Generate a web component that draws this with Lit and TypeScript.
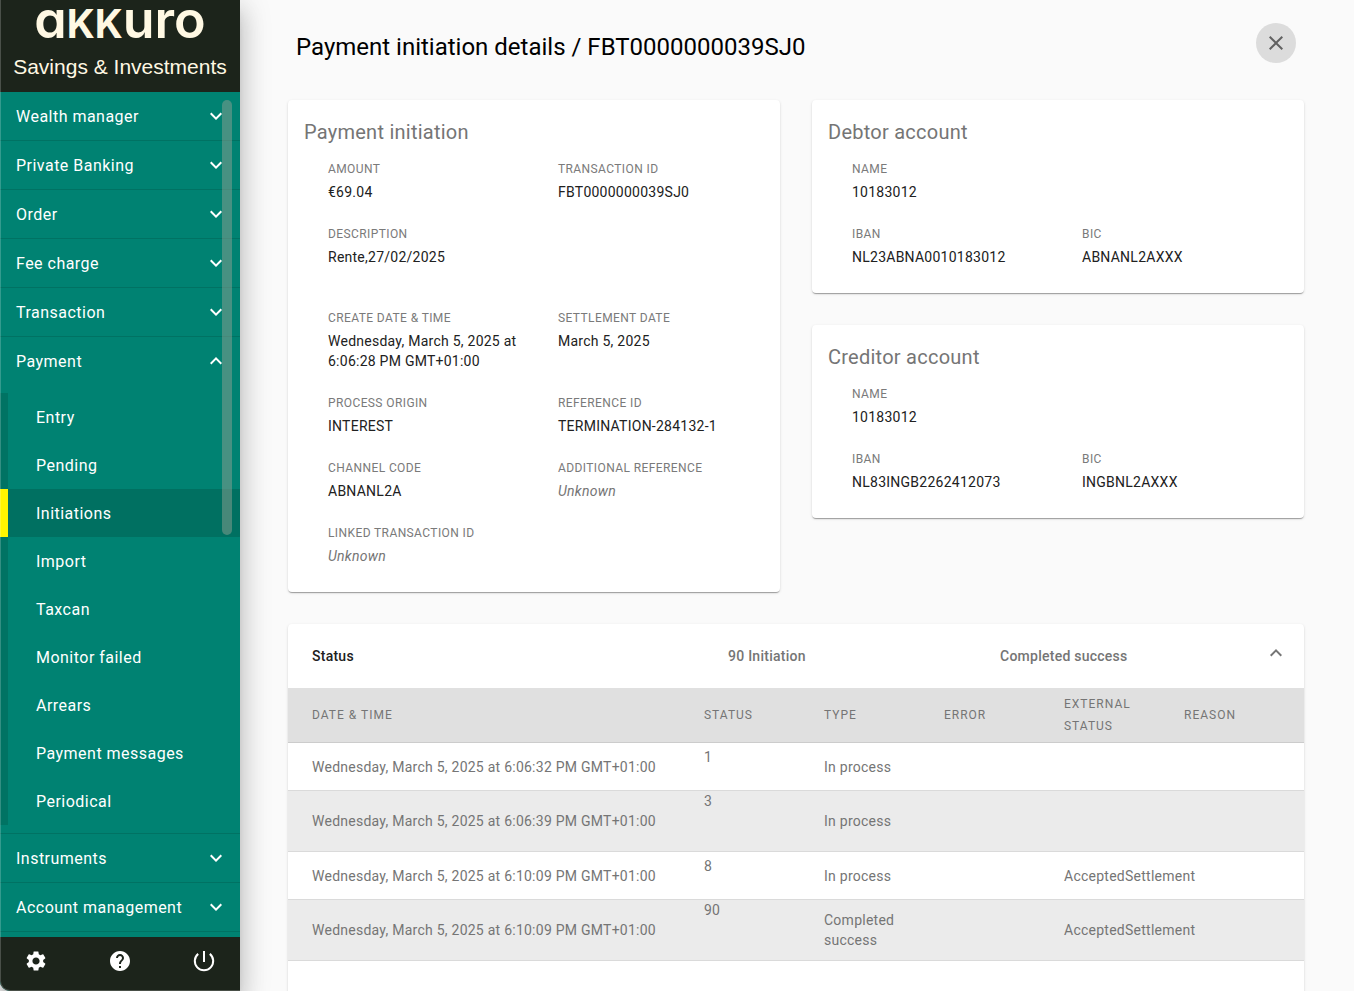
import { LitElement, html, css, svg, nothing } from "lit";
import { customElement, property, state } from "lit/decorators.js";
import { classMap } from "lit/directives/class-map.js";

interface Section {
  label: string;
  children?: string[];
}

interface Field {
  label: string;
  value?: string;
  kind?: "tall" | "wide";
}

interface StatusRow {
  date: string;
  status: string;
  type: string;
  external: string;
}

const SECTIONS: Section[] = [
  { label: "Wealth manager" },
  { label: "Private Banking" },
  { label: "Order" },
  { label: "Fee charge" },
  { label: "Transaction" },
  {
    label: "Payment",
    children: [
      "Entry",
      "Pending",
      "Initiations",
      "Import",
      "Taxcan",
      "Monitor failed",
      "Arrears",
      "Payment messages",
      "Periodical",
    ],
  },
  { label: "Instruments" },
  { label: "Account management" },
];

const INITIATION: Field[] = [
  { label: "Amount", value: "€69.04" },
  { label: "Transaction ID", value: "FBT0000000039SJ0" },
  { label: "Description", value: "Rente,27/02/2025", kind: "tall" },
  { label: "Create date & time", value: "Wednesday, March 5, 2025 at 6:06:28 PM GMT+01:00" },
  { label: "Settlement date", value: "March 5, 2025" },
  { label: "Process origin", value: "INTEREST" },
  { label: "Reference ID", value: "TERMINATION-284132-1" },
  { label: "Channel code", value: "ABNANL2A" },
  { label: "Additional reference" },
  { label: "Linked transaction ID", kind: "wide" },
];

const DEBTOR: Field[] = [
  { label: "Name", value: "10183012", kind: "wide" },
  { label: "IBAN", value: "NL23ABNA0010183012" },
  { label: "BIC", value: "ABNANL2AXXX" },
];

const CREDITOR: Field[] = [
  { label: "Name", value: "10183012", kind: "wide" },
  { label: "IBAN", value: "NL83INGB2262412073" },
  { label: "BIC", value: "INGBNL2AXXX" },
];

const ROWS: StatusRow[] = [
  { date: "Wednesday, March 5, 2025 at 6:06:32 PM GMT+01:00", status: "1", type: "In process", external: "" },
  { date: "Wednesday, March 5, 2025 at 6:06:39 PM GMT+01:00", status: "3", type: "In process", external: "" },
  { date: "Wednesday, March 5, 2025 at 6:10:09 PM GMT+01:00", status: "8", type: "In process", external: "AcceptedSettlement" },
  { date: "Wednesday, March 5, 2025 at 6:10:09 PM GMT+01:00", status: "90", type: "Completed success", external: "AcceptedSettlement" },
];

const chevron = (up: boolean) => html`
  <svg class="icon small" viewBox="0 0 24 24" aria-hidden="true">
    ${up
      ? svg`<path d="M12 8l-6 6 1.41 1.41L12 10.83l4.59 4.58L18 14z"></path>`
      : svg`<path d="M16.59 8.59L12 13.17 7.41 8.59 6 10l6 6 6-6z"></path>`}
  </svg>
`;

const base = css`
  :host {
    display: block;
    font-family: Roboto, "Liberation Sans", sans-serif;
    box-sizing: border-box;
  }
  *,
  *::before,
  *::after {
    box-sizing: border-box;
  }
  button {
    font: inherit;
    letter-spacing: inherit;
    color: inherit;
    background: none;
    border: 0;
    margin: 0;
    padding: 0;
    cursor: pointer;
    text-align: left;
  }
  ul,
  dl,
  dd,
  h1,
  h2 {
    margin: 0;
    padding: 0;
    list-style: none;
    font-weight: 400;
  }
  .icon {
    display: block;
    width: 24px;
    height: 24px;
    fill: currentColor;
    flex: none;
  }
`;

@customElement("side-nav")
class SideNav extends LitElement {
  @state() private open = "Payment";
  @state() private current = "Initiations";

  static styles = [
    base,
    css`
      :host {
        display: flex;
        flex-direction: column;
        position: relative;
        z-index: 1;
        height: 100%;
        background: #008272;
        color: #ffffff;
        font-size: 16px;
        letter-spacing: 0.03em;
        border-bottom-left-radius: 10px;
        box-shadow: 0 8px 10px -5px rgba(0, 0, 0, 0.2), 0 16px 24px 2px rgba(0, 0, 0, 0.14),
          0 6px 30px 5px rgba(0, 0, 0, 0.12);
      }
      :host::after {
        content: "";
        position: absolute;
        inset: 0;
        border-left: 1px solid rgba(255, 255, 255, 0.2);
        border-bottom: 1px solid rgba(255, 255, 255, 0.2);
        border-bottom-left-radius: 10px;
        pointer-events: none;
      }
      .brand {
        flex: none;
        height: 92px;
        background: #1c241b;
        color: #fff8e3;
        text-align: center;
        letter-spacing: normal;
        white-space: nowrap;
      }
      .logo {
        font-family: Inter, "Liberation Sans", sans-serif;
        font-size: 52px;
        font-weight: 600;
        line-height: 40px;
        height: 53px;
        font-feature-settings: "cv11";
      }
      .logo-caps {
        font-size: 39px;
        font-weight: 700;
        text-transform: uppercase;
      }
      .product {
        font-family: "Liberation Sans", Arial, sans-serif;
        font-size: 21px;
        line-height: 28px;
      }
      .scroll {
        position: relative;
        flex: 1;
        min-height: 0;
        overflow: hidden;
      }
      .thumb {
        position: absolute;
        top: 8px;
        right: 8px;
        width: 10px;
        height: 435px;
        border-radius: 5px;
        background: rgba(142, 160, 146, 0.5);
      }
      .section {
        border-bottom: 1px solid #007263;
      }
      .toggle {
        display: flex;
        align-items: center;
        justify-content: space-between;
        width: 100%;
        height: 48px;
        padding: 0 12px 0 16px;
      }
      .children {
        padding: 8px 0;
      }
      .child {
        display: flex;
        align-items: center;
        height: 48px;
        padding-left: 28px;
        border-left: 8px solid #007363;
        color: inherit;
        text-decoration: none;
      }
      .child.current {
        background: #007061;
        border-left-color: #fff500;
      }
      .tools {
        flex: none;
        display: flex;
        justify-content: space-between;
        height: 54px;
        padding: 0 12px;
        background: #1c241b;
        border-bottom-left-radius: 10px;
      }
      .tool {
        display: flex;
        align-items: center;
        justify-content: center;
        width: 48px;
        height: 48px;
      }
    `,
  ];

  render() {
    return html`
      <header class="brand">
        <div class="logo">a<span class="logo-caps">kk</span>uro</div>
        <div class="product">Savings &amp; Investments</div>
      </header>
      <nav class="scroll" aria-label="Main">
        <ul>
          ${SECTIONS.map((s) => {
            const open = s.label === this.open;
            return html`
              <li class="section">
                <button class="toggle" aria-expanded=${open} @click=${() => (this.open = open ? "" : s.label)}>
                  <span>${s.label}</span>${chevron(open)}
                </button>
                ${open && s.children
                  ? html`<ul class="children">
                      ${s.children.map(
                        (c) => html`<li>
                          <a
                            class=${classMap({ child: true, current: c === this.current })}
                            href="#"
                            @click=${(e: Event) => {
                              e.preventDefault();
                              this.current = c;
                            }}
                            >${c}</a
                          >
                        </li>`
                      )}
                    </ul>`
                  : nothing}
              </li>
            `;
          })}
        </ul>
        <div class="thumb"></div>
      </nav>
      <footer class="tools">
        <button class="tool" aria-label="Settings">
          <svg class="icon" viewBox="0 0 24 24">
            <path
              d="M19.14 12.94c.04-.3.06-.61.06-.94 0-.32-.02-.64-.07-.94l2.03-1.58c.18-.14.23-.41.12-.61l-1.92-3.32c-.12-.22-.37-.29-.59-.22l-2.39.96c-.5-.38-1.03-.7-1.62-.94l-.36-2.54c-.04-.24-.24-.41-.48-.41h-3.84c-.24 0-.43.17-.47.41l-.36 2.54c-.59.24-1.13.57-1.62.94l-2.39-.96c-.22-.08-.47 0-.59.22L2.74 8.87c-.12.21-.08.47.12.61l2.03 1.58c-.05.3-.09.63-.09.94s.02.64.07.94l-2.03 1.58c-.18.14-.23.41-.12.61l1.92 3.32c.12.22.37.29.59.22l2.39-.96c.5.38 1.03.7 1.62.94l.36 2.54c.05.24.24.41.48.41h3.84c.24 0 .44-.17.47-.41l.36-2.54c.59-.24 1.13-.56 1.62-.94l2.39.96c.22.08.47 0 .59-.22l1.92-3.32c.12-.22.07-.47-.12-.61l-2.01-1.58zM12 15.6c-1.98 0-3.6-1.62-3.6-3.6s1.62-3.6 3.6-3.6 3.6 1.62 3.6 3.6-1.62 3.6-3.6 3.6z"
            ></path>
          </svg>
        </button>
        <button class="tool" aria-label="Help">
          <svg class="icon" viewBox="0 0 24 24">
            <path
              d="M12 2C6.48 2 2 6.48 2 12s4.48 10 10 10 10-4.48 10-10S17.52 2 12 2zm1 17h-2v-2h2v2zm2.07-7.75l-.9.92C13.45 12.9 13 13.5 13 15h-2v-.5c0-1.1.45-2.1 1.17-2.83l1.24-1.26c.37-.36.59-.86.59-1.41 0-1.1-.9-2-2-2s-2 .9-2 2H8c0-2.21 1.79-4 4-4s4 1.79 4 4c0 .88-.36 1.68-.93 2.25z"
            ></path>
          </svg>
        </button>
        <button class="tool" aria-label="Log out">
          <svg class="icon" viewBox="0 0 24 24">
            <g fill="none" stroke="currentColor" stroke-width="2">
              <path d="M12 2v11"></path>
              <path d="M6.2 4.9a9.2 9.2 0 1 0 11.6 0"></path>
            </g>
          </svg>
        </button>
      </footer>
    `;
  }
}

@customElement("detail-card")
class DetailCard extends LitElement {
  @property() heading = "";
  @property({ attribute: false }) fields: Field[] = [];

  static styles = [
    base,
    css`
      :host {
        padding: 16px 16px 3px;
        border-radius: 4px;
        background: #ffffff;
        box-shadow: 0 2px 1px -1px rgba(0, 0, 0, 0.2), 0 1px 1px rgba(0, 0, 0, 0.14),
          0 1px 3px rgba(0, 0, 0, 0.12);
      }
      .heading {
        padding-bottom: 12px;
        font-size: 20px;
        line-height: 32px;
        letter-spacing: 0.0125em;
        color: #757575;
      }
      .fields {
        display: grid;
        grid-template-columns: 1fr 1fr;
      }
      .field {
        padding: 0 0 23px 24px;
      }
      .tall {
        min-height: 84px;
      }
      .tall,
      .wide {
        grid-column: 1 / -1;
      }
      .label {
        margin-bottom: 4px;
        font-size: 12px;
        line-height: 18px;
        letter-spacing: 0.0333em;
        text-transform: uppercase;
        color: #7a7a7a;
      }
      .value {
        font-size: 14px;
        line-height: 20px;
        letter-spacing: 0.0179em;
        color: #212121;
      }
      .unknown {
        font-style: italic;
        color: #757575;
      }
    `,
  ];

  render() {
    return html`
      <h2 class="heading">${this.heading}</h2>
      <dl class="fields">
        ${this.fields.map(
          (f) => html`
            <div class="field ${f.kind ?? ""}">
              <dt class="label">${f.label}</dt>
              <dd class=${classMap({ value: true, unknown: !f.value })}>${f.value ?? "Unknown"}</dd>
            </div>
          `
        )}
      </dl>
    `;
  }
}

@customElement("status-panel")
class StatusPanel extends LitElement {
  @state() private open = true;

  static styles = [
    base,
    css`
      :host {
        border-radius: 4px 4px 0 0;
        background: #ffffff;
        color: #757575;
        font-size: 14px;
        line-height: 20px;
        letter-spacing: 0.0179em;
        box-shadow: 0 2px 1px -1px rgba(0, 0, 0, 0.2), 0 1px 1px rgba(0, 0, 0, 0.14),
          0 1px 3px rgba(0, 0, 0, 0.12);
      }
      .summary {
        display: grid;
        grid-template-columns: 416px 272px 1fr 24px;
        align-items: center;
        width: 100%;
        height: 64px;
        padding: 0 16px 0 24px;
        font-weight: 500;
      }
      .name {
        color: #212121;
      }
      .arrow {
        padding-bottom: 6px;
      }
      .table {
        width: 100%;
        border-collapse: separate;
        border-spacing: 0;
        table-layout: fixed;
      }
      .col {
        width: 120px;
      }
      th,
      td {
        padding: 0 8px 0 0;
        font-weight: 400;
        text-align: left;
        vertical-align: middle;
        border-bottom: 1px solid #dadada;
      }
      th:first-child,
      td:first-child {
        padding-left: 24px;
      }
      th {
        height: 55px;
        background: #e0e0e0;
        border-bottom-color: #cccccc;
        font-size: 12px;
        line-height: 22px;
        letter-spacing: 0.0833em;
        text-transform: uppercase;
      }
      td {
        height: 48px;
      }
      .striped td {
        height: 61px;
        background: #ebebeb;
      }
      td.code {
        padding-top: 4px;
        vertical-align: top;
      }
      .striped td.code {
        padding-top: 0;
      }
      .external {
        white-space: nowrap;
      }
      .end {
        height: 64px;
      }
    `,
  ];

  render() {
    return html`
      <button class="summary" aria-expanded=${this.open} @click=${() => (this.open = !this.open)}>
        <span class="name">Status</span>
        <span>90 Initiation</span>
        <span>Completed success</span>
        <span class="arrow">${chevron(this.open)}</span>
      </button>
      ${this.open
        ? html`
            <table class="table">
              <colgroup>
                <col />
                <col class="col" span="5" />
              </colgroup>
              <thead>
                <tr>
                  <th scope="col">Date &amp; time</th>
                  <th scope="col">Status</th>
                  <th scope="col">Type</th>
                  <th scope="col">Error</th>
                  <th scope="col">External status</th>
                  <th scope="col">Reason</th>
                </tr>
              </thead>
              <tbody>
                ${ROWS.map(
                  (r, i) => html`
                    <tr class=${classMap({ striped: i % 2 === 1 })}>
                      <td>${r.date}</td>
                      <td class="code">${r.status}</td>
                      <td>${r.type}</td>
                      <td></td>
                      <td class="external">${r.external}</td>
                      <td></td>
                    </tr>
                  `
                )}
              </tbody>
            </table>
            <div class="end"></div>
          `
        : nothing}
    `;
  }
}

@customElement("app-root")
class AppRoot extends LitElement {
  static styles = [
    base,
    css`
      :host {
        display: grid;
        grid-template-columns: 240px minmax(0, 1fr);
        grid-template-rows: 100vh;
        height: 100vh;
        overflow: hidden;
        background: #fafafa;
      }
      .main {
        overflow: hidden;
        padding: 0 50px 0 48px;
      }
      .top {
        display: flex;
        align-items: center;
        justify-content: space-between;
        height: 100px;
        padding: 0 8px 14px;
      }
      .title {
        padding-top: 8px;
        font-size: 24px;
        line-height: 32px;
        color: #000000;
      }
      .close {
        display: flex;
        align-items: center;
        justify-content: center;
        width: 40px;
        height: 40px;
        border-radius: 50%;
        background: #dcdcdc;
        color: #616161;
      }
      .cards {
        display: grid;
        grid-template-columns: 1fr 1fr;
        gap: 32px;
        align-items: start;
        margin-bottom: 32px;
      }
      .accounts {
        display: grid;
        gap: 32px;
      }
    `,
  ];

  render() {
    return html`
      <side-nav></side-nav>
      <main class="main">
        <header class="top">
          <h1 class="title">Payment initiation details / FBT0000000039SJ0</h1>
          <button class="close" aria-label="Close">
            <svg class="icon" viewBox="0 0 24 24">
              <path
                d="M19 6.41L17.59 5 12 10.59 6.41 5 5 6.41 10.59 12 5 17.59 6.41 19 12 13.41 17.59 19 19 17.59 13.41 12z"
              ></path>
            </svg>
          </button>
        </header>
        <div class="cards">
          <detail-card heading="Payment initiation" .fields=${INITIATION}></detail-card>
          <div class="accounts">
            <detail-card heading="Debtor account" .fields=${DEBTOR}></detail-card>
            <detail-card heading="Creditor account" .fields=${CREDITOR}></detail-card>
          </div>
        </div>
        <status-panel></status-panel>
      </main>
    `;
  }
}
